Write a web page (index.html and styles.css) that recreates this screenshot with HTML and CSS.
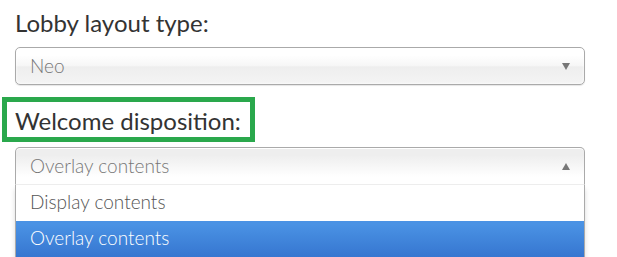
FILE: index.html
```html
<!DOCTYPE html>
<html>
<head>
<meta charset="utf-8">
<link rel="stylesheet" href="styles.css">
</head>
<body>
<div class="form">
  <label class="label first">Lobby layout type:</label>
  <div class="chosen">
    <div class="chosen-single">
      <span class="value">Neo</span>
      <span class="arrow down"></span>
    </div>
  </div>
  <div class="highlight-box">
    <label class="label">Welcome disposition:</label>
  </div>
  <div class="chosen open">
    <div class="chosen-single">
      <span class="value">Overlay contents</span>
      <span class="arrow up"></span>
    </div>
    <ul class="chosen-drop">
      <li class="option">Display contents</li>
      <li class="option active">Overlay contents</li>
    </ul>
  </div>
</div>
</body>
</html>
```
FILE: styles.css
```css
html, body {
  margin: 0;
  padding: 0;
  background: #fff;
  overflow: hidden;
}
body {
  font-family: Lato, "Noto Sans", sans-serif;
  color: #333;
}
.form {
  width: 570px;
  padding: 10px 0 0 15px;
}
.label {
  display: block;
  font-size: 24px;
  line-height: 26px;
  color: #333;
}
.label.first {
  margin-bottom: 11px;
}
.highlight-box {
  display: inline-block;
  border: 5px solid #2aa84c;
  margin: 12px 0 5px -13px;
  padding: 6px 9px 3px 8px;
}
.chosen {
  position: relative;
}
.chosen-single {
  display: flex;
  align-items: center;
  justify-content: space-between;
  height: 36px;
  padding: 0 14px 0 14px;
  border: 1px solid #aaa;
  border-radius: 5px;
  background: linear-gradient(#ffffff 20%, #f6f6f6 50%, #eeeeee 52%, #f4f4f4 100%);
  box-shadow: inset 0 0 3px #fff, 0 1px 1px rgba(0, 0, 0, 0.1);
  font-size: 19px;
  font-weight: 300;
  color: #777;
}
.value {
  margin-top: -1px;
}
.open .chosen-single {
  border-bottom-left-radius: 0;
  border-bottom-right-radius: 0;
  border-bottom-color: transparent;
  background: linear-gradient(#eeeeee 20%, #ffffff 80%);
  box-shadow: 0 1px 0 #fff inset;
}
.arrow {
  width: 0;
  height: 0;
  border-left: 4.5px solid transparent;
  border-right: 4.5px solid transparent;
}
.arrow.down {
  border-top: 7px solid #777;
}
.arrow.up {
  border-bottom: 7px solid #777;
}
.chosen-drop {
  list-style: none;
  margin: 0;
  padding: 0;
  border: 1px solid #aaa;
  border-top: 0;
  background: #fff;
  box-shadow: 0 4px 5px rgba(0, 0, 0, 0.15);
}
.option {
  height: 36px;
  line-height: 34px;
  padding: 0 14px 2px;
  box-sizing: border-box;
  font-size: 19px;
  font-weight: 300;
  color: #555;
}
.option.active {
  background: linear-gradient(#4a92e4 10%, #3676d0 100%);
  color: #fff;
}
```
